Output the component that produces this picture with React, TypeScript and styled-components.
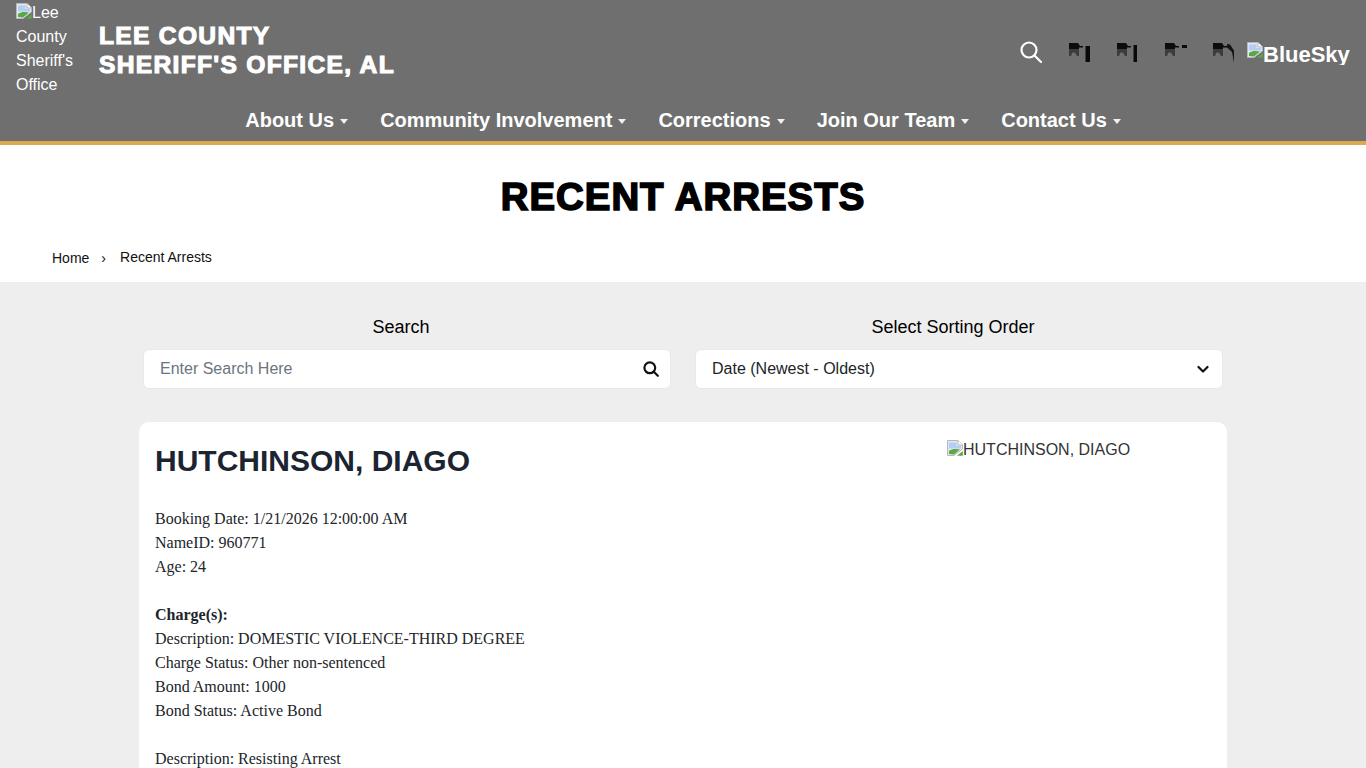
import React from "react";
import styled, { createGlobalStyle } from "styled-components";

const Global = createGlobalStyle`
  html, body { margin: 0; padding: 0; height: 768px; overflow: hidden; background: #fff; }
  body { font-family: "Liberation Sans", Arial, sans-serif; }
`;
const Header = styled.header`
  background: #6f6f6f;
  border-bottom: 4px solid #dca84e;
  height: 141px;
  color: #fff;
`;
const TopRow = styled.div`
  display: flex;
  align-items: flex-start;
  height: 96px;
  padding-left: 16px;
`;
const Logo = styled.div`
  width: 68px;
  padding-top: 1px;
  font-size: 16px;
  line-height: 24px;
  flex: none;
`;
const SiteTitle = styled.h1`
  margin: 21px 0 0 15px;
  font-size: 24.6px;
  line-height: 29px;
  font-weight: 700;
  letter-spacing: 1.3px;
  -webkit-text-stroke: 1.1px #fff;
  text-transform: uppercase;
`;
const Socials = styled.div`
  margin-left: auto;
  margin-top: 41px;
  display: flex;
  align-items: flex-start;
  padding-right: 16px;
`;
const SearchButton = styled.div`
  width: 22px;
  height: 24px;
  margin-right: 26px;
  svg { display: block; }
`;
const SocialSlot = styled.div`
  width: 24px;
  height: 24px;
  margin-right: 24px;
  svg { display: block; }
  &:nth-of-type(5) { margin-right: 11px; }
`;
const BlueSky = styled.div`
  display: flex;
  width: 103px;
  height: 24px;
  overflow: hidden;
  font-size: 22px;
  font-weight: 700;
  line-height: 28px;
  svg { flex: none; margin-top: 1px; }
`;
const Nav = styled.nav`
  display: flex;
  justify-content: center;
  gap: 32px;
  height: 45px;
  padding-top: 3px;
  box-sizing: border-box;
  align-items: center;
  font-size: 20px;
  font-weight: 700;
`;
const NavItem = styled.a`
  display: flex;
  align-items: center;
  gap: 6px;
`;
const Caret = styled.span`
  width: 0;
  height: 0;
  margin-top: 2px;
  border-left: 4px solid transparent;
  border-right: 4px solid transparent;
  border-top: 5px solid #fff;
  opacity: 0.9;
`;
const TitleBand = styled.section`
  background: #fff;
  height: 137px;
`;
const PageTitle = styled.h2`
  margin: 0;
  padding-top: 30px;
  height: 69px;
  text-align: center;
  font-size: 38.4px;
  line-height: 44px;
  font-weight: 700;
  color: #000;
  letter-spacing: 1px;
  -webkit-text-stroke: 1.6px #000;
`;
const Crumbs = styled.div`
  display: flex;
  align-items: center;
  padding: 0 0 0 52px;
  font-size: 14px;
  line-height: 24px;
  color: #111;
`;
const CrumbHome = styled.span`
  padding-top: 2px;
`;
const CrumbSep = styled.span`
  margin: 2px 14px 0 12px;
  font-size: 14px;
`;
const Main = styled.main`
  background: #eeeeee;
  height: 486px;
  overflow: hidden;
`;
const Filters = styled.div`
  display: grid;
  grid-template-columns: 552px 552px;
  padding: 33px 0 0 125px;
`;
const FilterColumn = styled.div`
  display: flex;
  flex-direction: column;
`;
const FilterLabel = styled.label`
  text-align: center;
  font-size: 18px;
  line-height: 24px;
  height: 34px;
  color: #000;
`;
const Field = styled.div`
  margin: 0 6px 0 18px;
  height: 38px;
  background: #fff;
  border: 1px solid #e9e9e9;
  border-radius: 6px;
  display: flex;
  align-items: center;
  justify-content: space-between;
  padding: 0 11px 0 16px;
  font-size: 16px;
  color: #212529;
`;
const Placeholder = styled.span`
  color: #6c757d;
`;
const Card = styled.article`
  margin: 33px 139px 0 139px;
  background: #fff;
  border-radius: 10px;
  height: 400px;
  padding: 16px;
  display: flex;
  justify-content: space-between;
  box-sizing: border-box;
`;
const Details = styled.div`
  font-family: "Liberation Serif", "Times New Roman", serif;
  font-size: 16px;
  line-height: 24px;
  color: #212529;
`;
const Name = styled.h3`
  margin: 0 0 28px 0;
  padding-top: 4px;
  font-family: "Liberation Sans", Arial, sans-serif;
  font-size: 30px;
  line-height: 37px;
  font-weight: 700;
  color: #1b2430;
`;
const Para = styled.p`
  margin: 0 0 24px 0;
`;
const Photo = styled.div`
  width: 264px;
  height: 20px;
  margin-top: 2px;
  display: flex;
  font-size: 16px;
  line-height: 20px;
  color: #333;
  svg { flex: none; }
`;

const BrokenImage = () => (
  <svg width="16" height="16" viewBox="0 0 16 16" style={{ verticalAlign: "-1px" }}>
    <path d="M0.5 0.5H11L15.5 5V9L7 15.5H0.5Z" fill="#dfe8f6" stroke="#b8b8b8" />
    <path d="M11 0.5V5H15.5" fill="#fff" stroke="#b8b8b8" />
    <path d="M2 2.5H9.5V6H14V8.5H2Z" fill="#b4cdf2" />
    <path d="M2 14V11C5 8.8 9 8.6 13 9.6L7 14.5Z" fill="#5aa83e" />
    <path d="M10 15.8L15.8 11V15.8Z" fill="#5aa83e" />
  </svg>
);

const DarkGlyph = ({ variant }: { variant: number }) => (
  <svg width="24" height="24" viewBox="0 0 24 24">
    <path d="M1 2H10L12 5H15V6.5H11V8H1Z" fill="#0c0c0c" />
    <path d="M1 8H11V15H9L7 11.5H4.5L3 15H1Z" fill="#3c3c3c" />
    {variant === 0 && <path d="M17.5 5H22V21H17.5Z" fill="#0a0a0a" />}
    {variant === 1 && <path d="M17.5 4H21V21H17.5Z" fill="#0a0a0a" />}
    {variant === 2 && <path d="M18 4H23V7H18Z" fill="#0a0a0a" />}
    {variant === 3 && <path d="M15 3L18 3.5L22 9.5V22L20 11L15 6.5Z" fill="#141414" />}
  </svg>
);

const Chevron = () => (
  <svg width="14" height="14" viewBox="0 0 14 14" fill="none" stroke="#111" strokeWidth="2.2" strokeLinecap="round" strokeLinejoin="round">
    <path d="M1.5 5L6 9.5L10.5 5" />
  </svg>
);

const SearchSmall = () => (
  <svg width="16" height="16" viewBox="0 0 16 16" fill="none" stroke="#111" strokeWidth="2.2" strokeLinecap="round">
    <circle cx="6.8" cy="6.8" r="5.4" />
    <path d="M10.8 10.8L14.8 14.8" />
  </svg>
);

const SearchLarge = () => (
  <svg width="22" height="22" viewBox="0 0 22 22" fill="none" stroke="#fff" strokeWidth="2.2" strokeLinecap="round">
    <circle cx="9" cy="9" r="7.5" />
    <path d="M14.5 14.5L21 21" />
  </svg>
);

const navItems = ["About Us", "Community Involvement", "Corrections", "Join Our Team", "Contact Us"];

export default function App() {
  return (
    <>
      <Global />
      <Header>
        <TopRow>
          <Logo>
            <BrokenImage />Lee County Sheriff's Office
          </Logo>
          <SiteTitle>
            Lee County
            <br />
            Sheriff's Office, AL
          </SiteTitle>
          <Socials>
            <SearchButton><SearchLarge /></SearchButton>
            {[0, 1, 2, 3].map((v) => (
              <SocialSlot key={v}><DarkGlyph variant={v} /></SocialSlot>
            ))}
            <BlueSky><BrokenImage />BlueSky</BlueSky>
          </Socials>
        </TopRow>
        <Nav>
          {navItems.map((n) => (
            <NavItem key={n}>{n}<Caret /></NavItem>
          ))}
        </Nav>
      </Header>
      <TitleBand>
        <PageTitle>RECENT ARRESTS</PageTitle>
        <Crumbs>
          <CrumbHome>Home</CrumbHome>
          <CrumbSep>›</CrumbSep>
          <span>Recent Arrests</span>
        </Crumbs>
      </TitleBand>
      <Main>
        <Filters>
          <FilterColumn>
            <FilterLabel>Search</FilterLabel>
            <Field>
              <Placeholder>Enter Search Here</Placeholder>
              <SearchSmall />
            </Field>
          </FilterColumn>
          <FilterColumn>
            <FilterLabel>Select Sorting Order</FilterLabel>
            <Field>
              <span>Date (Newest - Oldest)</span>
              <Chevron />
            </Field>
          </FilterColumn>
        </Filters>
        <Card>
          <Details>
            <Name>HUTCHINSON, DIAGO</Name>
            <Para>
              Booking Date: 1/21/2026 12:00:00 AM<br />
              NameID: 960771<br />
              Age: 24
            </Para>
            <Para>
              <b>Charge(s):</b><br />
              Description: DOMESTIC VIOLENCE-THIRD DEGREE<br />
              Charge Status: Other non-sentenced<br />
              Bond Amount: 1000<br />
              Bond Status: Active Bond
            </Para>
            <Para>Description: Resisting Arrest</Para>
          </Details>
          <Photo><BrokenImage />HUTCHINSON, DIAGO</Photo>
        </Card>
      </Main>
    </>
  );
}
